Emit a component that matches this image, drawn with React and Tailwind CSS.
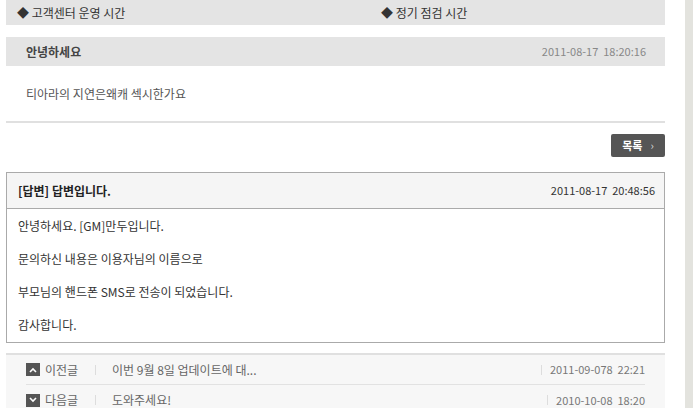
import React from "react";

const font = { fontFamily: '"Noto Sans CJK KR", "Liberation Sans", sans-serif' };

function NavIcon({ up }) {
  return (
    <span className="flex h-[13px] w-[14px] shrink-0 items-center justify-center bg-[#555555]">
      <svg width="8" height="6" viewBox="0 0 8 6">
        <path
          d={up ? "M1 5 L4 2 L7 5" : "M1 1 L4 4 L7 1"}
          stroke="#ffffff"
          strokeWidth="1.6"
          fill="none"
        />
      </svg>
    </span>
  );
}

function NavRow({ up, label, title, date, border }) {
  return (
    <div
      className={
        "mx-[20px] flex h-[30px] items-center " +
        (border ? "border-b border-[#e2e2e2]" : "")
      }
    >
      <NavIcon up={up} />
      <span className="ml-[5px] w-[44px] text-[12px] text-[#666]">{label}</span>
      <span className="mx-[6px] h-[10px] w-px bg-[#dddddd]" />
      <span className="ml-[10px] flex-1 text-[12px] text-[#666]">{title}</span>
      <span className="mr-[8px] h-[10px] w-px bg-[#dddddd]" />
      <span className="whitespace-pre text-[11px] text-[#777]">{date}</span>
    </div>
  );
}

export default function App() {
  return (
    <div className="flex h-[408px] w-[693px] overflow-hidden bg-white" style={font}>
      <div className="ml-[6px] w-[659px] shrink-0">
        {/* top bar */}
        <div className="flex h-[25px] items-center bg-[#e4e4e4] text-[12px] text-[#333]">
          <span className="ml-[11px] w-[364px]">◆ 고객센터 운영 시간</span>
          <span>◆ 정기 점검 시간</span>
        </div>

        {/* question header */}
        <div className="mt-[12px] flex h-[29px] items-center justify-between bg-[#e4e4e4] pl-[20px] pr-[19px]">
          <span className="text-[12px] font-bold text-[#444]">안녕하세요</span>
          <span className="whitespace-pre text-[11px] text-[#888]">2011-08-17  18:20:16</span>
        </div>

        {/* question body */}
        <div className="flex h-[57px] items-center border-b-2 border-[#e0e0e0] pl-[20px] text-[12px] text-[#555]">
          티아라의 지연은왜캐 섹시한가요
        </div>

        {/* list button */}
        <div className="mt-[11px] flex justify-end">
          <button className="flex h-[23px] w-[54px] items-center justify-center gap-[8px] rounded-[2px] bg-[#555555] text-[11px] font-bold text-white">
            <span>목록</span>
            <span className="text-[11px] font-normal text-[#ddd]">›</span>
          </button>
        </div>

        {/* answer box */}
        <div className="mt-[15px] border border-[#aaaaaa]">
          <div className="flex h-[36px] items-center justify-between border-b border-[#aaaaaa] bg-[#f5f5f5] pl-[11px] pr-[9px]">
            <span className="text-[12px] font-bold text-[#222]">[답변] 답변입니다.</span>
            <span className="whitespace-pre text-[11px] text-[#333]">2011-08-17  20:48:56</span>
          </div>
          <div className="pl-[11px] pb-[1px] text-[12px] leading-[33px] text-[#333]">
            <div>안녕하세요. [GM]만두입니다.</div>
            <div>문의하신 내용은 이용자님의 이름으로</div>
            <div>부모님의 핸드폰 SMS로 전송이 되었습니다.</div>
            <div>감사합니다.</div>
          </div>
        </div>

        {/* navigation */}
        <div className="mt-[10px] border-t-2 border-[#e0e0e0] bg-[#f7f7f7]">
          <NavRow up label="이전글" title="이번 9월 8일 업데이트에 대..." date="2011-09-078  22:21" border />
          <NavRow label="다음글" title="도와주세요!" date="2010-10-08  18:20" />
        </div>
      </div>
      <div className="w-[20px] shrink-0" />
      <div className="flex-1 bg-[#e3e3de]" />
    </div>
  );
}
